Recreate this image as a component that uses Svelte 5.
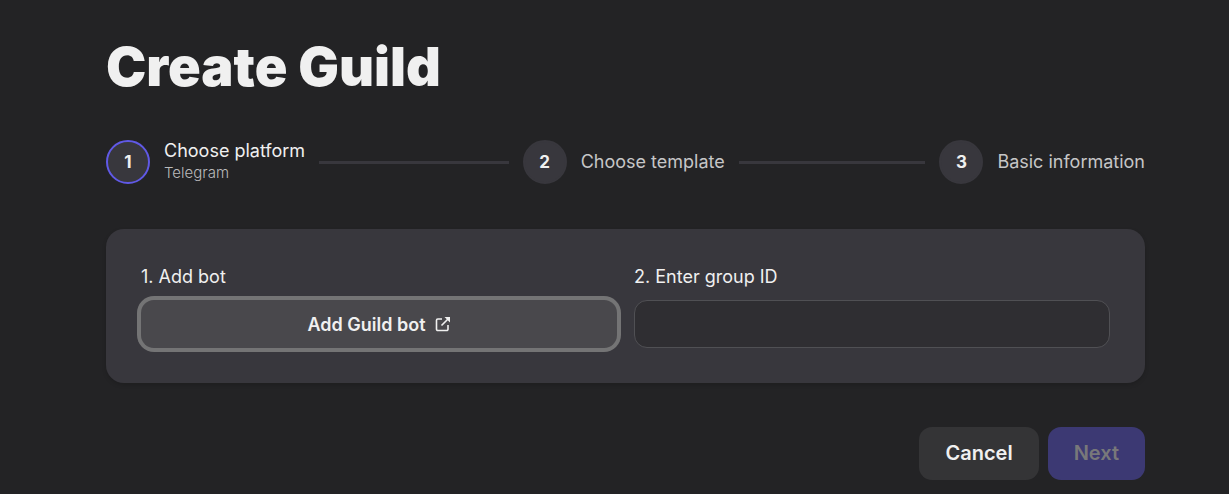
<script>
  const steps = [
    { title: 'Choose platform', description: 'Telegram' },
    { title: 'Choose template' },
    { title: 'Basic information' }
  ];
  const current = 0;
  let groupId = $state('');
</script>

<main>
  <h1>Create Guild</h1>

  <ol class="stepper">
    {#each steps as step, i}
      <li class="step" class:active={i === current}>
        <span class="number">{i + 1}</span>
        <div class="text">
          <span class="title">{step.title}</span>
          {#if step.description}
            <span class="description">{step.description}</span>
          {/if}
        </div>
        {#if i < steps.length - 1}
          <span class="line"></span>
        {/if}
      </li>
    {/each}
  </ol>

  <section class="card">
    <div class="field">
      <span class="label" id="bot-label">1. Add bot</span>
      <button type="button" class="add" aria-describedby="bot-label">
        Add Guild bot
        <svg viewBox="0 0 16 16" width="16" height="16" aria-hidden="true">
          <path d="M7 3H2.8A1.3 1.3 0 0 0 1.5 4.3v8.9a1.3 1.3 0 0 0 1.3 1.3h8.9a1.3 1.3 0 0 0 1.3-1.3V9M6.5 9.5 13 3" />
          <path class="head" d="M9.5 1H15v5.5z" />
        </svg>
      </button>
    </div>
    <div class="field">
      <label class="label" for="group-id">2. Enter group ID</label>
      <input id="group-id" type="text" bind:value={groupId} />
    </div>
  </section>

  <div class="actions">
    <button type="button" class="cancel">Cancel</button>
    <button type="button" class="next" disabled>Next</button>
  </div>
</main>

<style>
  :global(body) {
    background: #232325;
  }

  main {
    box-sizing: border-box;
    padding: 32px 84px 14px 106px;
    font-family: Inter, sans-serif;
    color: #f0f0f0;
  }

  h1 {
    margin: 0;
    font-size: 54px;
    font-weight: 900;
    line-height: 70px;
    white-space: nowrap;
  }

  .stepper {
    display: flex;
    gap: 14px;
    margin: 38px 0 45px;
    padding: 0;
    list-style: none;
  }

  .step {
    display: flex;
    flex: 1;
    align-items: center;
    gap: 14px;
    white-space: nowrap;
  }

  .step:last-child {
    flex: none;
  }

  .number {
    display: grid;
    box-sizing: border-box;
    place-items: center;
    width: 44px;
    height: 44px;
    border: 2px solid #38373d;
    border-radius: 50%;
    background: #38373d;
    font-size: 17px;
    font-weight: 700;
    line-height: 20px;
  }

  .active .number {
    border-color: #6059e6;
  }

  .text {
    display: flex;
    flex-direction: column;
  }

  .title {
    color: #c6c6c7;
    font-size: 18px;
    line-height: 22px;
  }

  .active .title {
    color: #f0f0f0;
  }

  .description {
    color: #bababb;
    font-size: 15px;
    font-weight: 300;
    line-height: 22px;
  }

  .line {
    flex: 1;
    height: 3px;
    background: #38373d;
  }

  .card {
    display: grid;
    grid-template-columns: 1fr 1fr;
    gap: 17px;
    padding: 35px;
    border-radius: 18px;
    background: #38373d;
    box-shadow: 0 2px 4px rgba(0, 0, 0, 0.15);
  }

  .field {
    display: flex;
    flex-direction: column;
    gap: 10px;
  }

  .label {
    font-size: 18px;
    line-height: 26px;
  }

  button {
    border: 0;
    border-radius: 13px;
    color: #f0f0f0;
    font-family: inherit;
    font-weight: 600;
  }

  .add {
    display: flex;
    align-items: center;
    justify-content: center;
    gap: 9px;
    height: 48px;
    background: #49484c;
    font-size: 18px;
    box-shadow: 0 0 0 4px #747475;
  }

  svg {
    fill: none;
    stroke: currentColor;
    stroke-width: 1.6;
    stroke-linejoin: round;
  }

  .head {
    fill: currentColor;
    stroke: none;
  }

  input {
    box-sizing: border-box;
    width: 100%;
    height: 48px;
    padding: 0 16px;
    border: 1px solid #505054;
    border-radius: 13px;
    background: #2f2e32;
    color: inherit;
    font: inherit;
    font-size: 18px;
  }

  .actions {
    display: flex;
    justify-content: flex-end;
    gap: 9px;
    margin-top: 44px;
  }

  .actions button {
    padding: 0 26px;
    font-size: 20px;
    line-height: 53px;
  }

  .cancel {
    background: #343436;
  }

  .actions .next {
    background: #3c3973;
    color: #78787a;
  }
</style>
